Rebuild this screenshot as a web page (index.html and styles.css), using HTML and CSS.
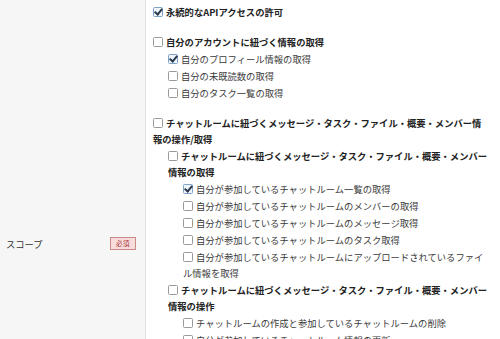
FILE: index.html
```html
<!DOCTYPE html>
<html lang="ja">
<head>
<meta charset="utf-8">
<link rel="stylesheet" href="styles.css">
</head>
<body>
<div class="form-row">
  <div class="form-label">
    <span class="label-text">スコープ</span>
    <span class="badge">必須</span>
  </div>
  <div class="form-field">
    <ul class="scope-list level-1">
      <li class="group">
        <label class="item strong"><span class="cb checked"></span>永続的なAPIアクセスの許可</label>
      </li>
      <li class="group">
        <label class="item strong"><span class="cb"></span>自分のアカウントに紐づく情報の取得</label>
        <ul class="scope-list level-2">
          <li><label class="item"><span class="cb checked"></span>自分のプロフィール情報の取得</label></li>
          <li><label class="item"><span class="cb"></span>自分の未既読数の取得</label></li>
          <li><label class="item"><span class="cb"></span>自分のタスク一覧の取得</label></li>
        </ul>
      </li>
      <li class="group">
        <label class="item strong"><span class="cb"></span>チャットルームに紐づくメッセージ・タスク・ファイル・概要・メンバー情報の操作/取得</label>
        <ul class="scope-list level-2">
          <li>
            <label class="item strong"><span class="cb"></span>チャットルームに紐づくメッセージ・タスク・ファイル・概要・メンバー情報の取得</label>
            <ul class="scope-list level-3">
              <li><label class="item"><span class="cb checked"></span>自分が参加しているチャットルーム一覧の取得</label></li>
              <li><label class="item"><span class="cb"></span>自分が参加しているチャットルームのメンバーの取得</label></li>
              <li><label class="item"><span class="cb"></span>自分か参加しているチャットルームのメッセージ取得</label></li>
              <li><label class="item"><span class="cb"></span>自分が参加しているチャットルームのタスク取得</label></li>
              <li><label class="item"><span class="cb"></span>自分が参加しているチャットルームにアップロードされているファイル情報を取得</label></li>
            </ul>
          </li>
          <li>
            <label class="item strong"><span class="cb"></span>チャットルームに紐づくメッセージ・タスク・ファイル・概要・メンバー情報の操作</label>
            <ul class="scope-list level-3">
              <li><label class="item"><span class="cb"></span>チャットルームの作成と参加しているチャットルームの削除</label></li>
              <li><label class="item"><span class="cb"></span>自分が参加しているチャットルーム情報の更新</label></li>
            </ul>
          </li>
        </ul>
      </li>
    </ul>
  </div>
</div>
</body>
</html>
```

FILE: styles.css
```css
html, body {
  margin: 0;
  padding: 0;
  background: #fff;
}
body {
  font-family: "Noto Sans CJK JP", "Noto Sans", sans-serif;
  color: #333;
  width: 500px;
  height: 339px;
  overflow: hidden;
}
.form-row {
  display: flex;
  min-height: 339px;
}
.form-label {
  flex: 0 0 130px;
  width: 130px;
  box-sizing: content-box;
  background: #f6f6f6;
  border-right: 1px solid #e2e2e2;
  display: flex;
  align-items: flex-start;
  justify-content: space-between;
  padding: 237px 9px 0 6px;
}
.label-text {
  font-size: 9.3px;
  line-height: 14px;
  color: #333;
}
.badge {
  display: inline-block;
  font-size: 6.5px;
  line-height: 11px;
  padding: 0 5px;
  color: #a33;
  background: #f8dcdc;
  border: 1px solid #c98a8a;
  letter-spacing: 0.5px;
}
.form-field {
  flex: 1;
  padding: 4px 11px 0 7px;
  min-width: 0;
}
.scope-list {
  list-style: none;
  margin: 0;
  padding: 0;
}
.level-2, .level-3 {
  padding-left: 15px;
}
.level-1 > .group + .group {
  margin-top: 14px;
}
.scope-list li + li,
.item + .scope-list {
  margin-top: 1px;
}
.item {
  display: block;
  font-size: 9.3px;
  line-height: 16px;
  color: #3a3a3a;
}
.item.strong {
  font-weight: bold;
  color: #222;
}
.cb {
  display: inline-block;
  width: 8px;
  height: 8px;
  border: 1px solid #9a9a9a;
  border-radius: 1.5px;
  background: #fff;
  margin-right: 3px;
  vertical-align: -1px;
  position: relative;
}
.cb.checked {
  border-color: #7fa3c4;
  background: #eef4fa;
}
.cb.checked::after {
  content: "";
  position: absolute;
  left: 2px;
  top: -1px;
  width: 3px;
  height: 6px;
  border-right: 2px solid #2a3a4c;
  border-bottom: 2px solid #2a3a4c;
  transform: rotate(40deg);
}
```
